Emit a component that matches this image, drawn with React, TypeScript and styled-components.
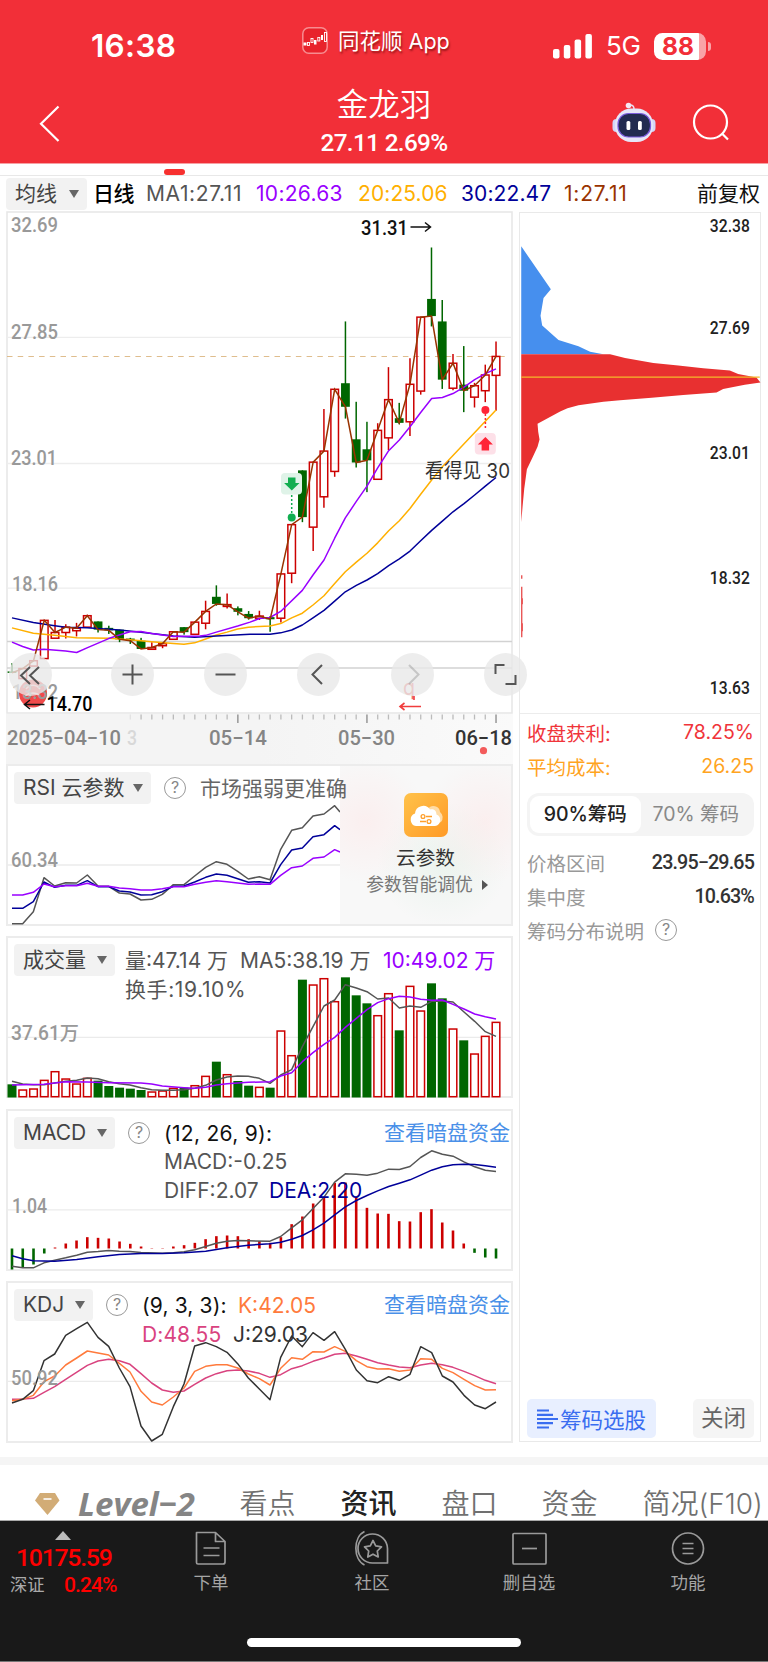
import React from "react";
import styled, { createGlobalStyle } from "styled-components";

const ui = `Inter, "Noto Sans CJK SC", sans-serif`;
const din = `Roboto, "Noto Sans CJK SC", sans-serif`;

const RED = "#cc0000";
const GREEN = "#006600";
const GRAY = "#555555";
const PURPLE = "#9900ff";
const NAVY = "#000099";
const AMBER = "#ffb000";
const BROWN = "#993300";

const Global = createGlobalStyle`
  *{box-sizing:border-box}
  body{margin:0;background:#fff;font-family:${ui};}
  svg{overflow:visible}
`;

/* ---------- data ---------- */

const STEP = 10.756;
const cx = (i: number) => 12 + STEP * i;

// [up?, high, low, bodyTop, bodyBottom]
type Candle = [number, number, number, number, number];
const candles: Candle[] = [
  [0, 1297, 1323, 1320, 1324], [1, 1312, 1340, 1312, 1340], [1, 1290, 1305, 1290, 1305], [1, 1176, 1286, 1177, 1284],
  [1, 1176, 1227, 1211, 1227], [1, 1188, 1228, 1196, 1211], [1, 1184, 1222, 1199, 1206], [1, 1161, 1196, 1164, 1196],
  [0, 1180, 1211, 1180, 1203], [0, 1192, 1215, 1198, 1205], [0, 1203, 1238, 1203, 1230], [0, 1226, 1243, 1228, 1234],
  [0, 1226, 1257, 1234, 1257], [1, 1238, 1258, 1253, 1258], [1, 1238, 1255, 1242, 1248], [1, 1208, 1230, 1209, 1230],
  [0, 1196, 1217, 1196, 1210], [1, 1180, 1216, 1182, 1216], [1, 1122, 1202, 1152, 1185], [0, 1079, 1136, 1111, 1131],
  [1, 1102, 1144, 1133, 1138], [0, 1138, 1163, 1143, 1153], [0, 1151, 1175, 1159, 1171], [1, 1150, 1176, 1165, 1171],
  [0, 1165, 1209, 1168, 1174], [1, 1046, 1183, 1047, 1171], [1, 909, 1073, 909, 1045], [0, 757, 902, 757, 888],
  [1, 733, 983, 734, 916], [1, 585, 862, 703, 831], [1, 530, 775, 530, 760], [0, 340, 612, 513, 579],
  [0, 565, 749, 670, 735], [0, 621, 818, 698, 729], [1, 625, 782, 645, 782], [1, 468, 700, 559, 666],
  [0, 568, 628, 611, 624], [1, 443, 661, 516, 621], [1, 328, 545, 328, 535], [0, 133, 354, 277, 325],
  [0, 280, 529, 340, 503], [1, 431, 533, 457, 527], [0, 409, 594, 517, 534], [1, 512, 581, 520, 552],
  [1, 461, 566, 490, 534], [1, 396, 590, 438, 491],
];

const ma10 = "36,1238 68,1250 100,1260 132,1258 197,1263 230,1267 261,1254 326,1228 358,1218 390,1209 423,1208 455,1214 520,1222 600,1221 617,1219 649,1210 713,1193 750,1182 778,1172 810,1169 842,1152 907,1093 939,1050 972,1008 1004,947 1036,890 1069,844 1101,801 1133,750 1166,702 1198,672 1230,635 1262,595 1295,556 1327,553 1359,542 1392,524 1424,503 1456,486 1488,473";
const ma20 = "36,1198 100,1213 164,1219 230,1226 326,1227 390,1231 455,1237 520,1242 552,1244 584,1240 617,1229 649,1218 681,1210 713,1201 745,1196 810,1193 842,1186 875,1170 907,1157 939,1134 972,1108 1004,1074 1036,1041 1069,1014 1101,989 1133,960 1166,926 1198,898 1230,864 1262,824 1295,784 1327,747 1488,588";
const ma30 = "36,1170 100,1183 164,1192 197,1196 261,1198 358,1204 423,1210 520,1221 584,1224 649,1221 750,1216 810,1216 842,1212 875,1204 907,1190 939,1170 972,1149 1004,1123 1036,1097 1069,1079 1101,1064 1133,1046 1166,1024 1198,1005 1230,983 1262,954 1295,925 1327,899 1359,873 1392,850 1424,826 1456,801 1488,777";

const rsi6 = "36,521 68,521 100,485 132,383 164,408 197,398 230,399 262,375 294,408 326,409 358,429 390,432 423,450 455,448 487,433 520,404 552,404 584,378 617,352 649,335 681,343 713,364 745,387 778,380 810,389 842,298 875,241 907,233 939,198 972,192 1004,167 1020,186";
const rsi12 = "36,475 68,475 100,455 132,396 164,412 197,406 230,406 262,392 294,410 326,410 358,423 390,426 423,435 455,434 487,425 520,409 552,408 584,396 617,382 649,372 681,376 713,386 745,397 778,395 810,399 842,344 875,300 907,294 939,260 972,254 1004,227 1020,239";
const rsi24 = "36,435 68,435 100,427 132,402 164,410 197,407 230,407 262,400 294,409 326,409 358,414 390,416 423,420 455,420 487,416 520,410 552,410 584,403 617,397 649,392 681,395 713,399 745,403 778,402 810,403 842,376 875,353 907,348 939,325 972,321 1004,299 1020,306";

const volumes = [463, 478, 475, 449, 423, 445, 460, 443, 452, 468, 473, 476, 480, 484, 481, 473, 473, 465, 437, 395, 432, 453, 467, 470, 473, 301, 375, 149, 163, 144, 213, 142, 196, 220, 255, 189, 301, 167, 241, 160, 205, 295, 331, 370, 317, 275];
const vol5 = "36,454 68,462 100,464 132,464 164,459 197,454 230,451 262,444 294,446 326,455 358,461 390,465 423,473 455,479 487,481 520,481 552,479 584,475 617,466 649,450 681,441 713,438 745,439 778,445 810,460 842,435 875,419 907,350 939,290 972,228 1004,210 1036,164 1069,174 1101,185 1133,207 1166,204 1198,234 1230,228 1262,232 1295,214 1327,213 1359,216 1392,246 1424,274 1456,305 1488,319";
const vol10 = "36,465 132,463 164,459 197,455 262,456 326,458 423,459 455,462 487,468 552,473 584,475 617,472 649,465 681,461 713,459 745,457 810,455 842,438 875,428 907,395 939,368 972,343 1004,322 1036,292 1069,265 1101,239 1133,218 1166,206 1198,199 1230,201 1262,208 1295,211 1327,210 1359,223 1392,237 1424,252 1456,260 1488,267";

const macdBars = [507, 501, 492, 459, 441, 429, 420, 410, 412, 414, 423, 430, 438, 443, 443, 438, 434, 427, 416, 407, 405, 407, 416, 422, 427, 410, 371, 348, 309, 290, 247, 246, 289, 322, 339, 340, 362, 363, 335, 326, 366, 390, 429, 457, 471, 474];
const diff = "36,497 68,502 100,502 132,487 164,479 197,472 230,464 262,455 294,453 326,450 358,452 390,453 423,456 487,458 520,457 552,454 584,448 617,438 649,428 681,422 713,420 745,421 810,422 842,408 875,382 907,358 939,324 972,290 1004,245 1036,220 1069,221 1101,224 1133,218 1166,206 1198,207 1230,198 1262,171 1295,151 1327,161 1359,167 1392,184 1424,199 1456,209 1488,213";
const dea = "36,466 68,475 100,481 164,482 230,477 294,469 358,462 423,459 487,459 552,457 617,452 681,442 745,434 810,430 842,425 875,416 907,405 939,388 972,368 1004,343 1036,319 1069,300 1101,285 1133,271 1166,258 1198,248 1230,238 1262,224 1295,209 1327,199 1359,193 1392,191 1424,192 1456,196 1488,200";

const kdjJ = "36,399 68,388 100,362 132,272 164,252 197,196 230,176 262,157 294,202 326,229 358,294 390,350 423,468 455,513 487,493 520,410 552,342 584,228 617,218 649,230 681,247 713,281 745,324 778,357 810,389 842,262 875,198 907,230 939,188 972,211 1004,185 1036,238 1069,300 1101,332 1133,338 1166,320 1198,331 1230,313 1262,230 1295,248 1327,318 1359,336 1392,376 1424,405 1456,416 1488,396";
const kdjK = "36,392 68,388 100,376 132,335 164,318 197,285 230,264 262,243 294,249 326,255 358,280 390,306 423,364 455,396 487,405 520,381 552,354 584,304 617,289 649,284 681,284 713,294 745,312 778,326 810,345 842,295 875,263 907,268 939,245 972,246 1004,230 1036,244 1069,272 1101,290 1133,297 1166,296 1198,304 1230,300 1262,266 1295,268 1327,295 1359,308 1392,328 1424,347 1456,360 1488,359";
const kdjD = "36,388 68,387 100,385 132,367 164,350 197,328 262,286 294,273 326,268 358,272 390,283 423,311 455,339 487,360 520,367 552,363 584,343 617,324 649,311 681,302 713,300 745,303 778,310 810,322 842,314 875,296 907,287 939,274 972,264 1004,253 1036,250 1069,258 1101,268 1133,278 1166,285 1198,291 1230,293 1262,285 1295,280 1327,284 1359,292 1392,304 1424,317 1456,331 1488,341";

const chipsBlue = "33,130 122,250 100,275 91,325 96,352 145,393 205,410 240,426 280,433 33,433";
const chipsRed = "33,433 300,433 345,443 430,457 505,464 580,472 660,478 685,488 740,498 752,512 705,518 640,530 620,540 520,547 425,555 330,562 280,566 205,576 172,584 150,593 82,628 84,650 88,672 82,692 68,720 50,755 42,810 37,860 33,904";

const scale = (pts: string, kx: number, ky: number, dy: number) =>
  pts.split(" ").map((p) => {
    const [a, b] = p.split(",").map(Number);
    return `${(a / kx).toFixed(2)},${(dy + b / ky).toFixed(2)}`;
  }).join(" ");

/* ---------- layout ---------- */

const Page = styled.div`width:768px;height:1662px;display:flex;flex-direction:column;overflow:hidden;background:#fff;`;
const Top = styled.header`height:164px;background:#f22f38;border-bottom:1px solid #f7a0a3;color:#fff;display:flex;flex-direction:column;flex:none;`;
const StatusBar = styled.div`height:80px;padding:12px 57px 0 91px;display:grid;grid-template-columns:211px 1fr auto;align-items:center;`;
const Clock = styled.span`font-size:31.500px;font-weight:600;letter-spacing:0.3px;line-height:1;`;
const AppTag = styled.div`display:flex;align-items:center;gap:10px;font-size:21.500px;line-height:26px;margin-top:-11px;text-shadow:1px 2px 2px rgba(80,0,0,.55);white-space:nowrap;`;
const Signals = styled.div`display:flex;align-items:center;gap:14px;`;
const FiveG = styled.span`font-size:26px;line-height:1;width:34px;letter-spacing:-0.4px;`;
const Battery = styled.div`display:flex;align-items:center;gap:2px;`;
const Cell = styled.div`width:52px;height:27px;border-radius:8.500px;background:linear-gradient(90deg,#fff 44.500px,#f9a3a7 44.500px);color:#f22f38;font-size:24.500px;font-weight:700;line-height:27px;padding-left:8px;`;
const Nub = styled.i`width:3px;height:9px;border-radius:0 4px 4px 0;background:#f9a3a7;`;
const TitleBar = styled.div`flex:1;display:grid;grid-template-columns:200px 1fr 200px;`;
const Back = styled.div`padding:25px 0 0 38px;`;
const Title = styled.div`text-align:center;font-size:31.500px;line-height:36px;padding-top:4px;font-family:"Noto Sans CJK SC",sans-serif;font-weight:350;`;
const Quote = styled.div`font-family:${din};font-size:24.300px;font-weight:500;line-height:26px;margin-top:10px;letter-spacing:-0.65px;`;
const TopActions = styled.div`display:flex;gap:34px;padding:22px 0 0 43px;`;

const PillRow = styled.div`height:12px;border-bottom:1px solid #e8e8e8;padding:5px 0 0 164px;flex:none;`;
const Pill = styled.div`width:21px;height:6px;border-radius:3px;background:#f7302f;`;
const MaRow = styled.div`height:35px;padding:1px 7px 0 6px;display:flex;align-items:center;flex:none;`;
const Select = styled.div<{ w: number }>`width:${(p) => p.w}px;height:32px;flex:none;background:#f2f2f2;border-radius:4px;color:#444;font-size:21px;line-height:32px;padding:0 8px 0 9px;display:flex;align-items:center;justify-content:space-between;white-space:nowrap;`;
const Caret = styled.i`width:0;height:0;border:5.500px solid transparent;border-top:8px solid #666;border-bottom:0;`;
const Label = styled.span<{ c: string; w?: number; ls?: number; b?: boolean; ml?: number }>`
  color:${(p) => p.c};flex:none;white-space:nowrap;font-size:21px;line-height:28px;margin-left:${(p) => p.ml ?? 0}px;
  width:${(p) => (p.w ? p.w + "px" : "auto")};letter-spacing:${(p) => p.ls ?? 0}px;font-weight:${(p) => (p.b ? 500 : 400)};
`;

const Main = styled.main`height:1246px;display:flex;padding-left:6px;gap:6px;flex:none;`;
const Left = styled.div`width:507px;display:flex;flex-direction:column;`;
const KPanel = styled.section`position:relative;height:503px;flex:none;`;
const Axis = styled.div`height:50px;background:linear-gradient(90deg,#f4f4f4 50%,#fafafa);flex:none;`;
const Panel = styled.section`position:relative;width:507px;height:162px;border:2px solid #ececec;margin-bottom:10.300px;flex:none;`;
const Head = styled.div`position:relative;display:flex;align-items:flex-start;padding:6px 0 0 6px;`;
const Plot = styled.svg`position:absolute;left:-2px;top:-2px;display:block;`;
const Lines = styled.div<{ ml: number }>`margin-left:${(p) => p.ml}px;padding-top:3px;display:flex;flex-direction:column;`;
const Line = styled.div`display:flex;height:28.700px;`;
const Help = styled.span<{ ml: number; mt?: number }>`margin:${(p) => p.mt ?? 5}px 0 0 ${(p) => p.ml}px;width:22px;height:22px;border:1.700px solid #999;border-radius:50%;color:#888;font-size:16px;line-height:19.500px;text-align:center;flex:none;`;
const Link = styled.a`position:absolute;right:1px;top:8px;color:#4a90e8;font-size:21px;line-height:28px;`;
const Tools = styled.div`position:absolute;left:3px;top:442px;display:flex;gap:50.300px;z-index:2;`;
const Tool = styled.div`width:43px;height:43px;border-radius:50%;background:rgba(232,232,232,.78);&:first-child{margin-right:8.600px;}`;
const Cloud = styled.div`position:absolute;right:0;top:0;width:171px;height:158px;display:flex;flex-direction:column;align-items:center;padding-top:27px;
  background:radial-gradient(circle at 15% 35%,rgba(255,225,225,.4),transparent 35%),radial-gradient(circle at 85% 35%,rgba(255,225,225,.4),transparent 35%),radial-gradient(ellipse at 60% 62%,rgba(225,240,230,.55),transparent 45%),#f8f8f8;`;
const CloudTitle = styled.div`font-size:19.700px;line-height:26px;color:#333;margin-top:8px;`;
const CloudSub = styled.div`font-size:17.800px;line-height:26px;color:#777;margin-top:1px;display:flex;align-items:center;gap:9px;padding-left:3px;`;
const Play = styled.i`width:0;height:0;border:5px solid transparent;border-left:6px solid #555;border-right:0;`;

const Right = styled.aside`width:242px;height:1230px;margin-top:1px;border:1px solid #e9e9e9;display:flex;flex-direction:column;`;
const ChipPlot = styled.svg`display:block;flex:none;border-bottom:1px solid #ececec;`;
const Info = styled.div`padding:1px 6px 0 7px;display:flex;flex-direction:column;flex:1;`;
const Row = styled.div<{ c: string }>`display:flex;justify-content:space-between;align-items:center;height:34px;font-size:19.500px;color:${(p) => p.c};white-space:nowrap;`;
const Val = styled.span`font-size:19.500px;`;
const DinVal = styled.span`font-family:${din};font-weight:500;font-size:19.700px;color:#333;letter-spacing:-0.85px;`;
const Note = styled.span`display:flex;align-items:center;`;
const Segmented = styled.div`height:43px;border-radius:12px;background:#f4f4f4;padding:3px;display:flex;margin:10px 0 9px;`;
const Segment = styled.div<{ on?: boolean }>`flex:1;border-radius:9px;text-align:center;line-height:37px;font-size:19.500px;background:${(p) => (p.on ? "#fff" : "transparent")};color:${(p) => (p.on ? "#222" : "#888")};font-weight:${(p) => (p.on ? 500 : 400)};`;
const Foot = styled.div`margin-top:auto;display:flex;justify-content:space-between;padding-bottom:3px;`;
const Pick = styled.div`width:129px;height:39px;border-radius:5px;background:#e8efff;color:#3a6df0;font-size:21.500px;display:flex;align-items:center;padding-left:10px;gap:2px;white-space:nowrap;`;
const Close = styled.div`width:61px;height:39px;border-radius:5px;background:#f5f5f5;color:#666;font-size:22.500px;line-height:38px;text-align:center;`;

const Strip = styled.div`height:8px;background:#f5f5f5;flex:none;`;
const Tabs = styled.nav`height:56px;display:flex;align-items:center;padding:22px 0 0 35px;flex:none;border-bottom:1px solid #aaa;`;
const Tab = styled.span<{ w: number; on?: boolean }>`width:${(p) => p.w}px;flex:none;font-size:28px;line-height:34px;white-space:nowrap;color:${(p) => (p.on ? "#222" : "#707070")};font-weight:${(p) => (p.on ? 500 : 350)};`;
const Level = styled.span`width:161.500px;font-family:"Open Sans",sans-serif;font-style:italic;font-weight:700;font-size:33px;line-height:34px;color:#858585;white-space:nowrap;`;
const Bottom = styled.footer`height:141px;background:#191919;display:flex;flex-direction:column;flex:none;justify-content:space-between;border-bottom:1px solid #777;`;
const NavRow = styled.div`display:flex;`;
const IndexBox = styled.div`width:128px;padding:10px 0 0 10px;color:#f00;font-family:${din};font-weight:500;`;
const Up = styled.i`display:block;width:0;height:0;margin-left:45px;border:8px solid transparent;border-bottom:9px solid #bbb;border-top:0;`;
const Index = styled.div`font-size:24.800px;line-height:28px;margin:4px 0 0 6px;letter-spacing:-1.250px;`;
const IndexSub = styled.div`display:flex;align-items:center;font-size:21px;line-height:26px;letter-spacing:-0.9px;span{width:54px;font-size:17.300px;color:#aaa;font-weight:400;letter-spacing:0;}`;
const NavItem = styled.div<{ ml: number }>`margin-left:${(p) => p.ml}px;width:60px;display:flex;flex-direction:column;align-items:center;padding-top:9px;color:#a5a5a5;font-size:17.500px;line-height:26px;white-space:nowrap;svg{margin-bottom:4px;}`;
const Home = styled.div`width:274px;height:9px;border-radius:5px;background:#fff;margin:0 0 14px 247px;`;

/* ---------- pieces ---------- */

const AxisText = ({ x, y, w, children, fill = "#999", size = 19.5, weight = 500, font = "Roboto" }: any) => (
  <text x={x} y={y} textLength={w} lengthAdjust="spacingAndGlyphs" fontFamily={`${font}, 'Noto Sans CJK SC', sans-serif`} fontWeight={weight} fontSize={size} fill={fill}>{children}</text>
);

const Poly = ({ d, c, dy = 0, ky = 3 }: { d: string; c: string; dy?: number; ky?: number }) => (
  <polyline points={scale(d, 3, ky, dy)} fill="none" stroke={c} strokeWidth={1.5} strokeLinejoin="round" />
);

const KChart = () => {
  const y = (v: number) => 200 + v / 2.8;
  const closes = candles.map((c, i) => `${cx(i)},${y(c[0] ? c[3] : c[4])}`).join(" ");
  return (
    <svg width="507" height="503" viewBox="6 211 507 503" display="block">
      <rect x="7" y="212" width="505" height="501" fill="none" stroke="#e8e8e8" strokeWidth="1.6" />
      {[337.3, 463.5, 588.2].map((v) => <line key={v} x1="7" x2="512" y1={v} y2={v} stroke="#ededed" strokeWidth="1.3" />)}
      {[641.5, 668].map((v) => <line key={v} x1="7" x2="512" y1={v} y2={v} stroke="#d2d2d2" strokeWidth="1.3" />)}
      <line x1="7" x2="508" y1="356.5" y2="356.5" stroke="#dfbd8d" strokeWidth="1.2" strokeDasharray="5.5 5.2" />
      <circle cx="33" cy="693.5" r="14" fill="#f04a4a" />
      <path d="M26 689c4-5 10-5 14 0M25 696c5-4 11-4 15 0" stroke="#fff" fill="none" strokeWidth="1.5" opacity=".7" />
      <AxisText x="11" y="232" w="47">32.69</AxisText>
      <AxisText x="11" y="339.3" w="47">27.85</AxisText>
      <AxisText x="11" y="465.200" w="46">23.01</AxisText>
      <AxisText x="12" y="590.5" w="46">18.16</AxisText>
      <AxisText x="12" y="698.5" w="46">13.32</AxisText>
      {candles.map(([up, h, l, t, b], i) => up ? (
        <g key={i} stroke={RED} strokeWidth="1.5" fill="none">
          {h < t && <line x1={cx(i)} x2={cx(i)} y1={y(h)} y2={y(t)} />}
          {l > b && <line x1={cx(i)} x2={cx(i)} y1={y(b)} y2={y(l)} />}
          <rect x={cx(i) - 3.8} y={y(t)} width="7.6" height={Math.max(1, y(b) - y(t))} />
        </g>
      ) : (
        <g key={i} fill={GREEN}>
          <rect x={cx(i) - 0.75} y={y(h)} width="1.5" height={y(l) - y(h)} />
          <rect x={cx(i) - 4.4} y={y(t)} width="8.8" height={Math.max(1.4, y(b) - y(t))} />
        </g>
      ))}
      <Poly d={ma20} c={AMBER} dy={200} ky={2.8} />
      <Poly d={ma30} c={NAVY} dy={200} ky={2.8} />
      <Poly d={ma10} c={PURPLE} dy={200} ky={2.8} />
      <polyline points={closes} fill="none" stroke={BROWN} strokeWidth="1.5" />
      <AxisText x="361" y="234.5" w="47" fill="#111">31.31</AxisText>
      <path d="M410.5 227h20m-5.5-4.5 5.5 4.5-5.5 4.5" fill="none" stroke="#111" strokeWidth="1.5" />
      <rect x="281" y="473" width="21" height="21.5" rx="4" fill="#dff3e8" />
      <path d="M288 477.500h7.500v5.500h4l-7.700 7.500-7.700-7.500h3.900z" fill="#12ae50" />
      <path d="M291.700 495v18" stroke="#12ae50" strokeWidth="1.5" strokeDasharray="2 2" />
      <circle cx="291.7" cy="517.5" r="4" fill="#12ae50" />
      <rect x="474.8" y="433" width="21" height="21.5" rx="4" fill="#fde0e8" />
      <path d="M485.400 437l7.500 7.500h-3.800v6h-7.500v-6h-3.800z" fill="#ff2436" />
      <path d="M485.400 414v16" stroke="#ff2436" strokeWidth="1.5" strokeDasharray="2 2" />
      <circle cx="485.4" cy="410" r="4" fill="#ff2436" />
      <AxisText x="425" y="477.5" w="85" fill="#333" font="Inter" weight={400} size={20}>看得见 30</AxisText>
      <path d="M44.500 704.500h-20m5.500-4.500-5.500 4.500 5.500 4.500" fill="none" stroke="#111" strokeWidth="1.5" />
      <AxisText x="46.5" y="711" w="46" fill="#000">14.70</AxisText>
      <AxisText x="403" y="695" w="12" fill="#ee6a6a" font="Inter" weight={400} size={22}>q</AxisText>
      <path d="M414 696v4M421 706.500h-21m4.500-3.500-4.500 3.500 4.500 3.500" fill="none" stroke="#f03c3c" strokeWidth="1.6" />
    </svg>
  );
};

const toolIcons = [
  <path d="M21 14 12 22.500l9 8.500M30 14l-9 8.500 9 8.500" />,
  <path d="M21.500 11.500v20M11.500 21.500h20" />,
  <path d="M11.500 21.500h20" />,
  <path d="M25 12 15.500 21.500 25 31" />,
  <path d="M18 12l9.500 9.500L18 31" opacity=".25" />,
  <path d="M11.500 21v-9h9M31.500 22v9h-10" />,
];

const TimeAxis = () => (
  <svg width="507" height="50" viewBox="6 714 507 50" display="block">
    {candles.map((_, i) => {
      if (i < 11) return null;
      const major = i === 21 || i === 33 || i === 45;
      return <line key={i} x1={cx(i)} x2={cx(i)} y1="714.5" y2={major ? 723 : 719.5} stroke={major ? "#888" : "#bbb"} strokeWidth="1.3" opacity={i === 11 ? 0.3 : 1} />;
    })}
    <AxisText x="7" y="745" w="114" size={20.5} fill="#858585">2025−04−10</AxisText>
    <AxisText x="127" y="745" w="10" size={20.5} fill="#d8d8d8">3</AxisText>
    <AxisText x="209" y="745" w="58" size={20.5} fill="#858585">05−14</AxisText>
    <AxisText x="338" y="745" w="57" size={20.5} fill="#858585">05−30</AxisText>
    <AxisText x="455" y="745" w="57" size={20.5} fill="#333">06−18</AxisText>
    <circle cx="483.5" cy="750.7" r="3.6" fill="#f35b5b" />
  </svg>
);

const Question = ({ ml, mt }: { ml: number; mt?: number }) => <Help ml={ml} mt={mt}>?</Help>;

const Nav = ({ ml, label, children }: any) => (
  <NavItem ml={ml}>
    <svg width="38" height="36" viewBox="0 0 38 36" fill="none" stroke="#9a9a9a" strokeWidth="1.7" strokeLinejoin="round">{children}</svg>
    {label}
  </NavItem>
);

export default function App() {
  return (
    <Page>
      <Global />
      <Top>
        <StatusBar>
          <Clock>16:38</Clock>
          <AppTag>
            <svg width="26" height="27" viewBox="0 0 26 27">
              <rect x=".8" y=".8" width="24.4" height="25.4" rx="6" fill="#e8222b" stroke="#f78c90" strokeWidth="1.5" />
              <g fill="#fff"><rect x="1.5" y="15.5" width="3" height="3" /><rect x="12" y="13" width="2.5" height="4.5" /><rect x="19" y="8" width="2" height="5" /></g>
              <g fill="none" stroke="#fff" strokeWidth=".9"><rect x="5.5" y="15.5" width="2" height="3" /><rect x="9" y="11.5" width="2" height="4" /><rect x="15.8" y="10.5" width="2" height="3.5" /><rect x="22.5" y="5.5" width="2" height="9" /></g>
            </svg>
            <span>同花顺 App</span>
          </AppTag>
          <Signals>
            <svg width="39" height="26" viewBox="0 0 39 26" fill="#fff">
              <rect y="16" width="6.5" height="9.5" rx="2" /><rect x="10.8" y="12" width="6.5" height="13.5" rx="2" />
              <rect x="21.6" y="6.5" width="6.5" height="19" rx="2" /><rect x="32.4" y="1" width="6.5" height="24.5" rx="2" />
            </svg>
            <FiveG>5G</FiveG>
            <Battery><Cell>88</Cell><Nub /></Battery>
          </Signals>
        </StatusBar>
        <TitleBar>
          <Back>
            <svg width="24" height="38" viewBox="0 0 24 38" fill="none" stroke="#fff" strokeWidth="2.2"><path d="M20.500 1.500 3 18.800 20.500 36" /></svg>
          </Back>
          <Title>金龙羽<Quote>27.11 2.69%</Quote></Title>
          <TopActions>
            <svg width="46" height="42" viewBox="0 0 46 42">
              <circle cx="17.5" cy="3.5" r="2.8" fill="#f6e9f4" /><path d="M19 3c3 0 4 1.500 4 4" stroke="#e9dff2" strokeWidth="1.5" fill="none" />
              <rect x="1.5" y="17" width="8" height="13" rx="4" fill="#d3d7f8" /><rect x="36.5" y="17" width="8" height="13" rx="4" fill="#d3d7f8" />
              <rect x="4" y="6.5" width="38" height="33.5" rx="16" fill="#e6e6f8" />
              <rect x="7" y="11.5" width="32.5" height="23.5" rx="10.5" fill="#222b50" stroke="#7a5bdc" strokeWidth="1.2" />
              <rect x="15.5" y="19" width="3.8" height="9" rx="1.5" fill="#fff" /><rect x="27" y="19" width="3.8" height="9" rx="1.5" fill="#fff" />
            </svg>
            <svg width="40" height="42" viewBox="0 0 40 42" fill="none" stroke="#fff" strokeWidth="2.2"><circle cx="19.5" cy="20" r="16.5" /><path d="M31 31.500 37 37.500" /></svg>
          </TopActions>
        </TitleBar>
      </Top>
      <PillRow><Pill /></PillRow>
      <MaRow>
        <Select w={81}>均线<Caret /></Select>
        <Label c="#000" b ml={6} w={47} ls={-0.5}>日线</Label>
        <Label c={GRAY} ml={6} w={105} ls={0.6}>MA1:27.11</Label>
        <Label c={PURPLE} ml={5} w={97} ls={0.3}>10:26.63</Label>
        <Label c={AMBER} ml={5} w={98} ls={0.1}>20:25.06</Label>
        <Label c={NAVY} ml={5} w={98} ls={0.1}>30:22.47</Label>
        <Label c={BROWN} ml={5} w={133} ls={0.8}>1:27.11</Label>
        <Label c="#111">前复权</Label>
      </MaRow>
      <Main>
        <Left>
          <KPanel>
            <KChart />
            <Tools>
              {toolIcons.map((icon, i) => (
                <Tool key={i}><svg width="43" height="43" viewBox="0 0 43 43" fill="none" stroke="#555" strokeWidth="2">{icon}</svg></Tool>
              ))}
            </Tools>
          </KPanel>
          <Axis><TimeAxis /></Axis>

          <Panel>
            <Plot width="507" height="162" viewBox="6 764 507 162">
              <line x1="7" x2="512" y1="865" y2="865" stroke="#ebebeb" strokeWidth="1.3" />
              <Poly d={rsi6} c={GRAY} dy={750} /><Poly d={rsi12} c={NAVY} dy={750} /><Poly d={rsi24} c={PURPLE} dy={750} />
              <AxisText x="11" y="867.3" w="47">60.34</AxisText>
            </Plot>
            <Cloud>
              <svg width="44" height="44" viewBox="0 0 44 44">
                <defs><linearGradient id="og" x2="1" y2="1"><stop stopColor="#ffc24a" /><stop offset="1" stopColor="#ff9a26" /></linearGradient></defs>
                <rect width="44" height="44" rx="7" fill="url(#og)" />
                <path d="M24 16a6.500 6.500 0 0 1 12 3 7 7 0 0 1 1 10l-6 2z" fill="#ffdca6" />
                <path d="M12 33a6.500 6.500 0 0 1-1-12.500A8.200 8.200 0 0 1 26 16.500c3.500-.8 6.500 1 6.500 5A6 6 0 0 1 31 33z" fill="#fff" />
                <g stroke="#ff9f2b" strokeWidth="1.3" fill="none"><circle cx="19" cy="23.5" r="1.9" /><path d="M22 23.500h6M16 28.500h6" /><circle cx="25" cy="28.5" r="1.9" /></g>
              </svg>
              <CloudTitle>云参数</CloudTitle>
              <CloudSub>参数智能调优<Play /></CloudSub>
            </Cloud>
            <Head>
              <Select w={137}>RSI 云参数<Caret /></Select>
              <Question ml={13} />
              <Lines ml={14}><Line><Label c="#666">市场强弱更准确</Label></Line></Lines>
            </Head>
          </Panel>

          <Panel>
            <Plot width="507" height="162" viewBox="6 936 507 162">
              <line x1="7" x2="512" y1="1037.3" y2="1037.3" stroke="#ebebeb" strokeWidth="1.3" />
              {volumes.map((v, i) => candles[i][0] ? (
                <rect key={i} x={cx(i) - 3.8} y={930.7 + v / 3} width="7.6" height={166 - v / 3} fill="#fff" stroke={RED} strokeWidth="1.5" />
              ) : (
                <rect key={i} x={cx(i) - 4.5} y={930 + v / 3} width="9" height={167.5 - v / 3} fill={GREEN} />
              ))}
              <Poly d={vol5} c={GRAY} dy={930} /><Poly d={vol10} c={PURPLE} dy={930} />
              <AxisText x="11" y="1040" w="68">37.61万</AxisText>
            </Plot>
            <Head>
              <Select w={101}>成交量<Caret /></Select>
              <Lines ml={10}>
                <Line><Label c={GRAY} w={115}>量:47.14 万</Label><Label c={GRAY} w={143}>MA5:38.19 万</Label><Label c={PURPLE}>10:49.02 万</Label></Line>
                <Line><Label c={GRAY} ls={0.6}>换手:19.10%</Label></Line>
              </Lines>
            </Head>
          </Panel>

          <Panel>
            <Plot width="507" height="162" viewBox="6 1108.5 507 162">
              <line x1="7" x2="512" y1="1209.3" y2="1209.3" stroke="#ebebeb" strokeWidth="1.3" />
              {macdBars.map((v, i) => (
                <line key={i} x1={cx(i)} x2={cx(i)} y1="1248" y2={1100 + v / 3} stroke={v > 444 ? GREEN : RED} strokeWidth="2.6" />
              ))}
              <Poly d={diff} c={GRAY} dy={1100} /><Poly d={dea} c={NAVY} dy={1100} />
              <AxisText x="12" y="1212" w="35">1.04</AxisText>
            </Plot>
            <Head>
              <Select w={101}>MACD<Caret /></Select>
              <Question ml={13} />
              <Lines ml={14}>
                <Line><Label c="#111" ls={0.3}>(12, 26, 9):</Label></Line>
                <Line><Label c={GRAY}>MACD:-0.25</Label></Line>
                <Line><Label c={GRAY} w={105}>DIFF:2.07</Label><Label c={NAVY}>DEA:2.20</Label></Line>
              </Lines>
              <Link>查看暗盘资金</Link>
            </Head>
          </Panel>

          <Panel>
            <Plot width="507" height="162" viewBox="6 1281 507 162">
              <line x1="7" x2="512" y1="1381.3" y2="1381.3" stroke="#ebebeb" strokeWidth="1.3" />
              <Poly d={kdjD} c="#d9437f" dy={1270} /><Poly d={kdjK} c="#ff7a3c" dy={1270} /><Poly d={kdjJ} c="#333" dy={1270} />
              <AxisText x="11" y="1384.5" w="47">50.92</AxisText>
            </Plot>
            <Head>
              <Select w={79}>KDJ<Caret /></Select>
              <Question ml={13} />
              <Lines ml={14}>
                <Line><Label c="#111" w={96} ls={0.15}>(9, 3, 3):</Label><Label c="#ff7a3c">K:42.05</Label></Line>
                <Line><Label c="#d9437f" w={91} ls={0.1}>D:48.55</Label><Label c="#333">J:29.03</Label></Line>
              </Lines>
              <Link>查看暗盘资金</Link>
            </Head>
          </Panel>
        </Left>

        <Right>
          <ChipPlot width="240" height="501" viewBox="520 213 240 501">
            <g transform="translate(510 0)">
              <polygon points={scale(chipsBlue, 3, 2.8, 200)} fill="#468fee" />
              <polygon points={scale(chipsRed, 3, 2.8, 200)} fill="#e83030" />
              <path d="M11 377.500h239" stroke="#f5b82a" strokeWidth="1.3" />
              <path d="M11.500 576v3.500M11.500 587.500v50.500M12 599v6M12 624v8" stroke="#e84a4a" strokeWidth="1.3" />
            </g>
            {([["32.38", 232], ["27.69", 334.3], ["23.01", 459.6], ["18.32", 585], ["13.63", 694.5]] as [string, number][]).map(([t, y]) => (
              <AxisText key={t} x="710" y={y} w="40" size={17.5} fill="#222">{t}</AxisText>
            ))}
          </ChipPlot>
          <Info>
            <Row c="#f0343a"><span>收盘获利:</span><Val>78.25%</Val></Row>
            <Row c="#ffa41f"><span>平均成本:</span><Val>26.25</Val></Row>
            <Segmented><Segment on>90%筹码</Segment><Segment>70% 筹码</Segment></Segmented>
            <Row c="#999"><span>价格区间</span><DinVal>23.95−29.65</DinVal></Row>
            <Row c="#999"><span>集中度</span><DinVal>10.63%</DinVal></Row>
            <Row c="#999"><Note>筹码分布说明<Question ml={11} mt={0} /></Note></Row>
            <Foot>
              <Pick>
                <svg width="21" height="20" viewBox="0 0 21 20" stroke="#3a6df0" strokeWidth="2.2"><path d="M0 1.500h12M0 5.800h16M0 10h21M0 14.200h16M0 18.500h12" /></svg>
                筹码选股
              </Pick>
              <Close>关闭</Close>
            </Foot>
          </Info>
        </Right>
      </Main>
      <Strip />
      <Tabs>
        <svg width="43" height="22" viewBox="0 0 43 22"><path d="M5 0h15l4.500 7.500L12.500 22 0 7.500z" fill="#d2ac76" /><path d="M8.500 6h8" stroke="#fff" strokeWidth="1.6" /></svg>
        <Level>Level−2</Level>
        <Tab w={101}>看点</Tab><Tab w={101} on>资讯</Tab><Tab w={100}>盘口</Tab><Tab w={101}>资金</Tab><Tab w={125}>简况(F10)</Tab>
      </Tabs>
      <Bottom>
        <NavRow>
          <IndexBox>
            <Up />
            <Index>10175.59</Index>
            <IndexSub><span>深证</span>0.24%</IndexSub>
          </IndexBox>
          <Nav ml={53} label="下单"><path d="M4.500 2.500h19l9.500 9v20.500a2 2 0 0 1-2 2H6a1.500 1.500 0 0 1-1.500-1.500zM23.500 2.500v9H33M11.500 18h16M11.500 25.500h16" /></Nav>
          <Nav ml={101} label="社区"><path d="M19.500 4a14.500 14.500 0 1 0 0 29H34.500V18.500A15 15 0 0 0 19.500 4zM11.500 1.500C0 7 0 29.500 11.500 35" /><path d="m20 10.500 2.700 5.300 5.800 1-4.200 4.200.9 6-5.200-2.800-5.200 2.800.9-6-4.200-4.200 5.800-1z" /></Nav>
          <Nav ml={97} label="删自选"><rect x="3" y="3.5" width="33" height="30.5" rx="1" /><path d="M12 18.500h15" /></Nav>
          <Nav ml={99} label="功能"><circle cx="19" cy="18.5" r="15.5" /><path d="M13.500 13.500h11M13.500 18.500h11M13.500 23.500h11" /></Nav>
        </NavRow>
        <Home />
      </Bottom>
    </Page>
  );
}
